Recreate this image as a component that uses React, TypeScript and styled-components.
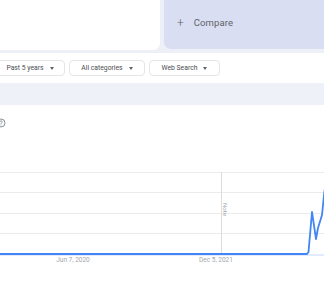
import styled, { createGlobalStyle } from 'styled-components';

const GlobalStyle = createGlobalStyle`
  html, body {
    margin: 0;
    padding: 0;
    background: #eef0f7;
  }
  body {
    font-family: Roboto, "Open Sans", Arial, sans-serif;
  }
`;

const filters = [
  { label: 'Past 5 years', width: 70 },
  { label: 'All categories', width: 76 },
  { label: 'Web Search', width: 71 },
];

const TrendChart = () => {
  const grid = [12, 32, 53, 73];
  return (
    <ChartSvg width={324} height={110} viewBox="0 0 324 110">
      {grid.map((y) => (
        <line key={y} x1={0} x2={324} y1={y + 0.5} y2={y + 0.5} stroke="#ececec" strokeWidth={1} />
      ))}
      <line x1={221.5} x2={221.5} y1={12} y2={94} stroke="#dcdcdc" strokeWidth={1} />
      <text
        x={225}
        y={49.5}
        fontSize={6}
        fill="#a4a8ad"
        textAnchor="middle"
        transform="rotate(90 225 49.5)"
        dominantBaseline="middle"
      >
        Note
      </text>
      <line x1={0} x2={324} y1={95} y2={95} stroke="#c6d8fb" strokeWidth={1} />
      <path
        d="M-2 94 L307 94 L308.5 92 L312 52 L316 79 L318 68 L322 55 L324 35 L326 20"
        fill="none"
        stroke="#4285f4"
        strokeWidth={1.8}
        strokeLinejoin="round"
      />
      <text x={73} y={101.5} fontSize={6.5} fill="#a4a8ad" textAnchor="middle">
        Jun 7, 2020
      </text>
      <text x={216} y={101.5} fontSize={6.5} fill="#a4a8ad" textAnchor="middle">
        Dec 5, 2021
      </text>
    </ChartSvg>
  );
};

const App = () => {
  return (
    <Page>
      <GlobalStyle />
      <TopRow>
        <SearchCard />
        <CompareCard>
          <PlusSign>+</PlusSign>
          <CompareLabel>Compare</CompareLabel>
        </CompareCard>
      </TopRow>
      <FilterBar>
        {filters.map((f) => (
          <FilterButton key={f.label} $width={f.width}>
            <span>{f.label}</span>
            <Caret />
          </FilterButton>
        ))}
      </FilterBar>
      <Strip />
      <ChartCard>
        <HelpIcon width={10} height={10} viewBox="0 0 10 10">
          <circle cx={5} cy={5} r={4} fill="none" stroke="#80868b" strokeWidth={0.9} />
          <path
            d="M3.7 4 Q3.7 2.9 5 2.9 Q6.3 2.9 6.3 3.9 Q6.3 4.6 5.5 5 Q5 5.3 5 6"
            fill="none"
            stroke="#80868b"
            strokeWidth={0.8}
          />
          <circle cx={5} cy={7.1} r={0.5} fill="#80868b" />
        </HelpIcon>
        <TrendChart />
      </ChartCard>
    </Page>
  );
};

const Page = styled.div`
  width: 324px;
  height: 286px;
  overflow: hidden;
  background: #eef0f7;
`;

const TopRow = styled.div`
  display: flex;
  gap: 4px;
  height: 50px;
  margin-bottom: 3px;
`;

const SearchCard = styled.div`
  width: 160px;
  flex-shrink: 0;
  background: #ffffff;
  border-radius: 0 0 7px 0;
`;

const CompareCard = styled.div`
  flex: 1;
  display: flex;
  align-items: center;
  gap: 10px;
  padding: 0 0 5px 13px;
  box-sizing: border-box;
  background: #d9def2;
  border-radius: 0 0 0 7px;
  height: 49px;
  margin-right: -10px;
`;

const PlusSign = styled.span`
  font-size: 12px;
  font-weight: 300;
  color: #5f6368;
  line-height: 1;
  margin-top: 1px;
`;

const CompareLabel = styled.span`
  font-size: 9.5px;
  color: #5f6368;
  letter-spacing: 0.1px;
`;

const FilterBar = styled.div`
  display: flex;
  gap: 4px;
  align-items: flex-start;
  height: 30px;
  padding-top: 7px;
  box-sizing: border-box;
  margin-left: -5px;
  background: #ffffff;
  width: 340px;
`;

const FilterButton = styled.div<{ $width: number }>`
  width: ${(p) => p.$width}px;
  height: 16px;
  box-sizing: border-box;
  display: flex;
  align-items: center;
  justify-content: center;
  gap: 6px;
  border: 1px solid #e3e5e8;
  border-radius: 4px;
  font-size: 6.8px;
  color: #4a4e52;
  white-space: nowrap;
  background: #ffffff;
`;

const Caret = styled.span`
  width: 0;
  height: 0;
  border-left: 2.5px solid transparent;
  border-right: 2.5px solid transparent;
  border-top: 3px solid #5f6368;
`;

const Strip = styled.div`
  height: 22px;
  background: #eef1f8;
`;

const ChartCard = styled.div`
  height: 181px;
  background: #ffffff;
  padding-top: 13px;
  box-sizing: border-box;
`;

const HelpIcon = styled.svg`
  display: block;
  margin-left: -4px;
  margin-bottom: 32px;
`;

const ChartSvg = styled.svg`
  display: block;
  overflow: visible;
`;

export default App;
